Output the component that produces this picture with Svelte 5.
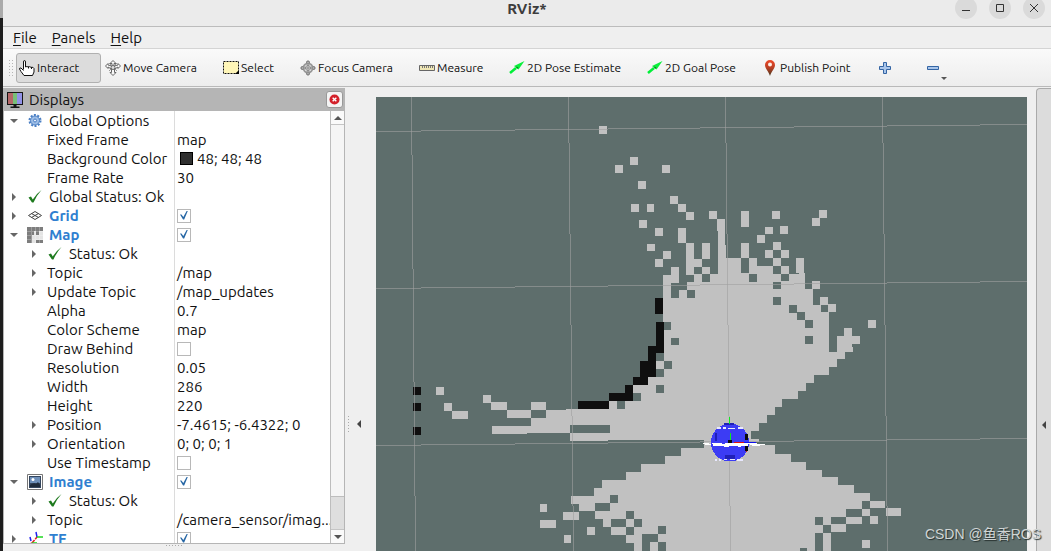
<script>
  let rows = $state([
    { depth: 0, arrow: 'open', icon: 'gear', name: 'Global Options' },
    { depth: 1, name: 'Fixed Frame', value: 'map' },
    { depth: 1, name: 'Background Color', value: '48; 48; 48', swatch: true },
    { depth: 1, name: 'Frame Rate', value: '30' },
    { depth: 0, arrow: 'closed', icon: 'ok', name: 'Global Status: Ok' },
    { depth: 0, arrow: 'closed', icon: 'grid', name: 'Grid', display: true, checked: true },
    { depth: 0, arrow: 'open', icon: 'map', name: 'Map', display: true, checked: true },
    { depth: 1, arrow: 'closed', icon: 'ok', name: 'Status: Ok' },
    { depth: 1, arrow: 'closed', name: 'Topic', value: '/map' },
    { depth: 1, arrow: 'closed', name: 'Update Topic', value: '/map_updates' },
    { depth: 1, name: 'Alpha', value: '0.7' },
    { depth: 1, name: 'Color Scheme', value: 'map' },
    { depth: 1, name: 'Draw Behind', checked: false },
    { depth: 1, name: 'Resolution', value: '0.05' },
    { depth: 1, name: 'Width', value: '286' },
    { depth: 1, name: 'Height', value: '220' },
    { depth: 1, arrow: 'closed', name: 'Position', value: '-7.4615; -6.4322; 0' },
    { depth: 1, arrow: 'closed', name: 'Orientation', value: '0; 0; 0; 1' },
    { depth: 1, name: 'Use Timestamp', checked: false },
    { depth: 0, arrow: 'open', icon: 'image', name: 'Image', display: true, checked: true },
    { depth: 1, arrow: 'closed', icon: 'ok', name: 'Status: Ok' },
    { depth: 1, arrow: 'closed', name: 'Topic', value: '/camera_sensor/imag...' },
    { depth: 0, arrow: 'closed', icon: 'tf', name: 'TF', display: true, checked: true }
  ]);

  const menus = ['File', 'Panels', 'Help'];

  const tools = [
    { icon: 'hand', name: 'Interact', active: true, cls: 'interact' },
    { icon: 'move', name: 'Move Camera', cls: 'move' },
    { icon: 'select', name: 'Select', cls: 'select' },
    { icon: 'focus', name: 'Focus Camera', cls: 'focus' },
    { icon: 'ruler', name: 'Measure', cls: 'measure' },
    { icon: 'arrow', name: '2D Pose Estimate', cls: 'pose' },
    { icon: 'arrow', name: '2D Goal Pose', cls: 'goal' },
    { icon: 'pin', name: 'Publish Point', cls: 'publish' }
  ];

  // Map cells as [x, y, width = 8, height = 8]
  const freeCells = [
    [599,126],[630,157],[615,165],[662,165],[638,181],[670,196],[678,204],[686,212],[709,211],
    [631,204],[647,204,7],[639,220],[655,228],[647,244,8,7],[663,251],[655,259],[678,228,8,15],
    [686,243,8,32],[694,259],[702,243,8,16],[702,267,8,7],
    [741,211,8,16],[772,211],[819,210],[812,218],[765,227,8,7],[780,226],[757,235],[741,243,8,15],
    [773,242],[765,250],[781,250],[773,258],[796,258,8,15],[812,281],[805,289],[820,297],[828,304],
    [844,328],[852,336],[868,320],
    [436,387],[444,403],[452,411,16],[483,395],[491,402,16],[507,410,24],[531,402,15],
    [540,504,7],[540,520,16],[587,527],[564,535,7],
    [870,501,15,7],[886,508,15],[862,509,8,7],[870,516],[846,517,16,7],[831,524,15],[862,540],
    [751,439,8,3]
  ];
  const unknownCells = [
    [687,290],[741,258,8,15],[749,274],[781,274,8,7],[773,282,8,7],[773,297],[789,305],[797,312],
    [805,320],[805,336],[829,344],[663,322],[671,338,8,7],[664,361],[656,385],[633,393],[617,401],
    [570,425,40],[642,534,16],[642,542,8,9],[658,542,8,9],[658,526],[610,495],[595,503,15],[626,511],
    [634,519],[611,519,15],[626,527],[815,517],[823,525],[815,533,8,18],[800,548,7,3]
  ];
  const wallCells = [
    [655,298,8,16],[656,322,8,31],[648,346,8,16],[640,361,16,16],[633,377,15],[625,385,8,16],
    [609,393,24],[578,401,31],[413,387],[413,403],[413,427]
  ];
</script>

{#snippet icon(kind)}
  {#if kind === 'hand'}
    <svg class="ico" viewBox="0 0 16 16"><path d="M4.500 9.500V2q0-1.500 1-1.500t1 1.500v5q1.500-1 2.700 0 1.500-.8 2.800.3 2.500-.5 3 1.200V12l-1.500 3.500h-8.500L2 11.500.5 9q0-1.500 1.500-1l2.500 2.500" fill="#fff" stroke="#111" /><path d="M9.500 6.500v2M12.500 7v2" stroke="#111" /></svg>
  {:else if kind === 'move'}
    <svg class="ico" viewBox="0 0 16 16"><path d="M8 .5 11 3.500H9V6l4-1V3.500L15.500 6 13 8.500V7L9.500 9v3.500H11L8 15.500l-3-3h1.500V9L3 7v1.500L.5 6 3 3.500V5l4 1V3.500H5z" fill="#f8f8f8" stroke="#666" /><path d="m4 11 8-8M4 3l8 8" stroke="#999" /><circle cx="8" cy="7.500" r="2" fill="#ddd" stroke="#666" /></svg>
  {:else if kind === 'select'}
    <svg class="ico" viewBox="0 0 16 16"><path d="M.5 1.500h15v12H.5z" fill="#fff6b8" stroke="#111" stroke-dasharray="2 1" /><path d="M16 10v4h-4z" fill="#000" /></svg>
  {:else if kind === 'focus'}
    <svg class="ico" viewBox="0 0 16 16" fill="none" stroke="#888"><circle cx="8" cy="8" r="4.500" stroke="#999" stroke-width="2" /><path d="M8 0v16M0 8h16M6.500 3.500v-2h3v2M6.500 12.500v2h3v-2M3.500 6.500h-2v3h2M12.500 6.500h2v3h-2" /><circle cx="8" cy="8" r="2.500" fill="#eee" /><path d="M8 5v6M5 8h6" /></svg>
  {:else if kind === 'ruler'}
    <svg class="ico" viewBox="0 0 16 16"><path d="M.5 5.500h15v5H.5z" fill="#efe6b4" stroke="#666" /><path d="M3.500 6v2M5.500 6v2M7.500 6v2M9.500 6v2M11.500 6v2M13.500 6v2" stroke="#777" /></svg>
  {:else if kind === 'arrow'}
    <svg class="ico" viewBox="0 0 16 16"><path d="m1 13 6-5" stroke="#00f038" stroke-width="2.500" /><path d="M15.500 1 5 6l4.500 3.500z" fill="#0bef3b" /><path d="M7 6.500 9.500 7.500 8 9z" fill="#087c20" /></svg>
  {:else if kind === 'pin'}
    <svg class="ico" viewBox="0 0 16 16"><defs><linearGradient id="pin" x2="0" y2="1"><stop stop-color="#ef4929" /><stop offset=".5" stop-color="#b83f24" /><stop offset="1" stop-color="#46391f" /></linearGradient></defs><path d="M8 0a5 5 0 0 1 5 5c0 3.500-3.500 6-5 11-1.500-5-5-7.500-5-11a5 5 0 0 1 5-5z" fill="url(#pin)" /><circle cx="8" cy="4.500" r="2" fill="#fff0e8" /></svg>
  {:else if kind === 'plus'}
    <svg class="ico small" viewBox="0 0 12 12"><path d="M4.500.5h3v4h4v3h-4v4h-3v-4h-4v-3h4z" fill="#a9c5ea" stroke="#3465a4" /></svg>
  {:else if kind === 'minus'}
    <svg class="ico small" viewBox="0 0 12 12"><path d="M.5 4.500h11v3H.5z" fill="#a9c5ea" stroke="#3465a4" /></svg>
  {:else if kind === 'monitor'}
    <svg class="ico" viewBox="0 0 16 16"><path d="M0 0h16v13H0z" fill="#151515" /><path d="M1 1h5v11H1z" fill="#b56868" /><path d="M6 1h4v11H6z" fill="#78c078" /><path d="M10 1h5v11h-5z" fill="#9292e8" /><path d="M6.500 13h3v1.500h3V16h-9v-1.500h3z" fill="#151515" /></svg>
  {:else if kind === 'gear'}
    <svg class="ico" viewBox="0 0 16 16"><circle cx="8" cy="7.500" r="5.500" fill="none" stroke="#4a7fc4" stroke-width="2" stroke-dasharray="2 1.450" /><circle cx="8" cy="7.500" r="4.500" fill="#9dbde6" stroke="#4a7fc4" /><circle cx="8" cy="7.500" r="1.500" fill="#e8f0fb" stroke="#4a7fc4" /></svg>
  {:else if kind === 'ok'}
    <svg class="ico" viewBox="0 0 16 16"><path d="M1.500 8.500 4 7.500l1.800 3Q9 5 14.500 1 9.500 6.500 6.500 13.500H5z" fill="#1e7a1e" /></svg>
  {:else if kind === 'grid'}
    <svg class="ico" viewBox="0 0 16 16" fill="none" stroke="#444"><path d="M1.500 7.500 8 3.500l6.500 4L8 11.500zM4.500 5.500l7 4M11.500 5.500l-7 4" /></svg>
  {:else if kind === 'map'}
    <svg class="ico" viewBox="0 0 16 16" shape-rendering="crispEdges"><path d="M0 0h16v16H0z" fill="#e4e4e4" /><path d="M0 0h16v4h-4v4H9V4H7v4H5v8H0z" fill="#7d7d7d" /><path d="M9 13h7v3H9z" fill="#7d7d7d" /><path d="M4.500 0v16M8.500 0v16M12.500 0v16M0 4.500h16M0 8.500h16M0 12.500h16" stroke="#fff" stroke-opacity=".25" /></svg>
  {:else if kind === 'image'}
    <svg class="ico" viewBox="0 0 16 16"><path d="M.5.5h15v15H.5z" fill="#fff" stroke="#777" /><path d="M2 2h12v12H2z" fill="#35475f" /><path d="M3 3h10v6H3z" fill="#6d8fb9" /><path d="M3 11q4-3 6-1l2-2 2 3v2H3z" fill="#1e2b3b" /><circle cx="6" cy="5.500" r="1.500" fill="#fff" /></svg>
  {:else if kind === 'tf'}
    <svg class="ico" viewBox="0 0 16 16" fill="none" stroke-width="1.500"><path d="m5 12 5-6" stroke="#e02020" stroke-dasharray="4 1" /><path d="M10 6 9 1M4 10 3 6" stroke="#2020f0" /><path d="M10 6h6M5 12h5" stroke="#20d820" /><path d="m1 14 4-2" stroke="#e02020" /></svg>
  {/if}
{/snippet}

<div class="screen">
  <div class="backdrop"></div>
  <main class="window">
    <header class="titlebar">
      <span></span>
      <h1>RViz*</h1>
      <div class="controls">
        <button aria-label="Minimize"><svg viewBox="0 0 22 22"><path d="M7 13.500h8" /></svg></button>
        <button aria-label="Maximize"><svg viewBox="0 0 22 22"><path d="M7.500 7.500h7v7h-7z" /></svg></button>
        <button aria-label="Close"><svg viewBox="0 0 22 22"><path d="m7 7 8 8M15 7l-8 8" /></svg></button>
      </div>
    </header>

    <nav class="menubar">
      {#each menus as menu}
        <button><u>{menu[0]}</u>{menu.slice(1)}</button>
      {/each}
    </nav>

    <div class="toolbar">
      <span class="grip"></span>
      {#each tools as tool}
        <button class="tool {tool.cls}" class:active={tool.active}>{@render icon(tool.icon)}<span>{tool.name}</span></button>
      {/each}
      <button class="tool add" aria-label="Add tool">{@render icon('plus')}</button>
      <button class="tool remove" aria-label="Remove tool">{@render icon('minus')}<i class="drop"></i></button>
    </div>

    <div class="workspace">
      <section class="dock">
        <div class="dock-title">
          {@render icon('monitor')}
          <h2>Displays</h2>
          <button aria-label="Close panel"><svg viewBox="0 0 12 12"><circle cx="6" cy="6" r="5.500" fill="#d3202a" /><path d="m4 4 4 4M8 4 4 8" stroke="#fff" stroke-width="1.500" /></svg></button>
        </div>
        <div class="tree">
          <div class="tree-view">
            <table>
              <tbody>
                {#each rows as row, i}
                  <tr>
                    <th scope="row">
                      <div class="cell" class:child={row.depth === 1}>
                        <span class="expander {row.arrow ?? ''}"></span>
                        {#if row.icon}{@render icon(row.icon)}{/if}
                        {#if row.checked !== undefined}
                          <label for="row-{i}" class:display={row.display}>{row.name}</label>
                        {:else}
                          <span class="name">{row.name}</span>
                        {/if}
                      </div>
                    </th>
                    <td>
                      <div class="value">
                        {#if row.swatch}<span class="swatch"></span>{/if}
                        {#if row.checked !== undefined}
                          <input id="row-{i}" type="checkbox" bind:checked={row.checked} />
                        {:else if row.value}
                          <span class="text">{row.value}</span>
                        {/if}
                      </div>
                    </td>
                  </tr>
                {/each}
              </tbody>
            </table>
          </div>
          <div class="scrollbar">
            <button aria-label="Scroll up"><i class="up"></i></button>
            <div class="track"><div class="thumb"></div></div>
            <button aria-label="Scroll down"><i class="down"></i></button>
          </div>
        </div>
        <div class="split"><span></span></div>
      </section>

      <div class="collapse"><span class="dots"></span><button aria-label="Hide left dock"><i class="left"></i></button></div>

      <div class="view">
        <svg class="scene" viewBox="376 97 651 454" preserveAspectRatio="xMidYMin slice" shape-rendering="crispEdges" role="img" aria-label="Occupancy map">
          <path fill="#5e6e6c" d="M0 0h1600v1200H0z" />
          <g fill="#c1c1c1">
            <path d="M663 275h8v-8h8v16h-8v15h8v-8h8v-8h7v-8h8v8h8v-8h8v-43h-1v-12h8v26h1v13h31v8h16v8h26v-1h6v24h8v8h8v7h8v32h8v-8h15v11h1v5h-8v7h-8v8h-8v8h-15v8h-8v8h-8v8h-16v8h-7v8h-8v8h-8v8h-8v16h-39v-7H608v1h-38v-8h-43v1h-35v-8h39v-8h15v-8h20v-1h43v-8h24v-16h15v-8h8v-8h8z" />
            <path d="M781 266h8v8h-8zM805 305h8v8h-8z" />
            <path d="M704 431h47v9h5v5h19v9h16v8h15v8h16v7h16v8h16v8h16v8h-8v8h-16v8h-15v34H634v-8h-8v-8h-15v-8h-8v-8h-8v-8h-16v9h-16v-8h16v-8h-8v-8h23v-8h8v-8h24v-8h15v-8h24v-8h16v-8h23z" />
            {#each freeCells as [x, y, w = 8, h = 8]}<rect {x} {y} width={w} height={h} />{/each}
          </g>
          <g fill="#5e6e6c">
            {#each unknownCells as [x, y, w = 8, h = 8]}<rect {x} {y} width={w} height={h} />{/each}
            <path d="M656 353h8v8h-8zM656 369h8v8h-8z" />
          </g>
          <path d="M656 361h8v8h-8z" fill="#c1c1c1" />
          <g fill="#0f0f0f">
            {#each wallCells as [x, y, w = 8, h = 8]}<rect {x} {y} width={w} height={h} />{/each}
          </g>
          <g stroke="#a0a0a0" stroke-opacity=".6" fill="none">
            <path d="M411.500 97 415.500 551M568.500 97l5 454M725.500 97l5 454M882.500 97l5 454" />
            <path d="M376 131.500 1027 124.500M376 288.500 1027 281.500M376 445.500 1027 438.500" />
          </g>
          <circle cx="730" cy="442.500" r="19" fill="#3c3cf4" />
          <path d="M724 423h10v2h-10zM725 455h10v4h-10zM715 433h2v8h-2z" fill="#2020b8" />
          <path d="M717 427h4v2h-4zM723 427h3v2h-3zM728 428h7v1h-7zM738 427h5v2h-5zM715 459h2v2h-2zM719 459h2v2h-2zM724 459h3v1h-3zM730 459h5v1h-5zM737 459h6v2h-6z" fill="#e8e8ff" />
          <path d="M729.500 417v7M730.500 433v9" stroke="#10e820" />
          <path d="M734 442.500h10M746.500 449v3" stroke="#e01010" />
          <path d="M744 442.500h12" stroke="#1010f0" />
          <path d="M728 440h4v4h-4zM745 434h3v6h-3zM745 445h3v6h-3z" fill="#0a0a0a" />
          <path d="M703 443h6v1h-6zM705 444h6v1h-6zM712 443h10v1h-10zM713 444h35v2h-35zM725 443h18v1h-18zM724 446h5v1h-5zM738 446h3v1h-3zM743 443h14v1h-14zM750 444h15v1h-15zM752 445h8v1h-8z" fill="#fff" />
        </svg>
        <span class="watermark">CSDN @鱼香ROS</span>
      </div>

      <button class="side" aria-label="Hide right dock"><i class="left"></i></button>
    </div>
  </main>
</div>

<style>
  :global(body) { margin: 0; background: #fff; }
  .screen {
    display: flex;
    height: 100vh;
    padding-right: 5px;
    overflow: hidden;
    box-sizing: border-box;
    color: #111;
    font: 15px/19px Ubuntu, "Noto Sans", "Noto Sans CJK SC", sans-serif;
  }
  .backdrop { flex: 0 0 3px; background: linear-gradient(#aaa 18px, #1d1d1d 18px); }
  .window { flex: 1; min-width: 0; display: flex; flex-direction: column; background: #efefef; }
  button { padding: 0; border: 0; background: none; color: inherit; font: inherit; }
  h1, h2 { margin: 0; }
  svg { display: block; }

  .titlebar {
    display: grid;
    grid-template-columns: 1fr auto 1fr;
    height: 26px;
    background: #ebebeb;
    border-bottom: 1px solid #bcbcbc;
  }
  .titlebar h1 { font-size: 15px; line-height: 18px; font-weight: 700; color: #3d3d3d; }
  .controls { display: flex; justify-content: flex-end; gap: 12px; padding-right: 6px; }
  .controls button { width: 22px; height: 22px; margin-top: -3px; border-radius: 50%; background: #dadada; }
  .controls path { fill: none; stroke: #333; }

  .menubar { display: flex; gap: 15px; height: 21px; padding-left: 10px; border-bottom: 1px solid #d4d4d4; }
  .menubar button { line-height: 22px; }
  .menubar u { text-underline-offset: 2px; }

  .toolbar {
    display: flex;
    align-items: center;
    height: 37px;
    background: linear-gradient(#fafafa, #ededed);
    border-bottom: 1px solid #b9b9b9;
    font-size: 12px;
  }
  .grip { width: 5px; height: 18px; margin: 0 3px 0 5px; background: radial-gradient(circle, #b5b5b5 1px, transparent 1px) 0 0 / 3px 3px; }
  .tool { display: flex; align-items: center; gap: 2px; height: 30px; box-sizing: border-box; white-space: nowrap; position: relative; }
  .tool.active { padding-left: 2px; background: #dcdcdc; border: 1px solid #b0b0b0; border-radius: 3px; }
  .interact { width: 85px; }
  .move { width: 113px; padding-left: 4px; }
  .select { width: 78px; padding-left: 9px; }
  .focus { width: 119px; padding-left: 8px; }
  .measure { width: 90px; padding-left: 8px; }
  .pose { width: 138px; padding-left: 8px; }
  .goal { width: 114px; padding-left: 8px; }
  .publish { width: 126px; padding-left: 9px; }
  .add { width: 48px; }
  .drop { position: absolute; right: -8px; bottom: 3px; border: 3px solid transparent; border-top-color: #555; border-bottom: 0; }
  .ico { flex: none; width: 16px; height: 16px; }
  .ico.small { width: 12px; height: 12px; }

  .workspace { flex: 1; min-height: 0; display: flex; padding-top: 1px; }
  .dock { flex: 0 0 342px; display: flex; flex-direction: column; min-height: 0; }
  .dock-title { display: flex; align-items: center; flex: 0 0 23px; padding: 0 2px 0 4px; background: #b5b5b5; }
  .dock-title h2 { flex: 1; margin-left: 6px; font-size: 15px; font-weight: 400; }
  .dock-title button { display: grid; place-items: center; width: 17px; height: 17px; background: #f4f4f4; border: 1px solid #999; border-radius: 3px; box-sizing: border-box; }
  .dock-title button svg { width: 11px; height: 11px; }
  .tree { flex: 1; min-height: 0; display: flex; background: #fff; border: 1px solid #b5b5b5; border-top: 0; }
  .tree-view { flex: 1; min-width: 0; overflow: hidden; }
  table { width: 100%; table-layout: fixed; border-collapse: collapse; }
  th, td { height: 19px; padding: 0; text-align: left; font-weight: 400; }
  th { width: 170px; border-right: 1px solid #dcdcdc; }
  .cell, .value { display: flex; align-items: center; height: 19px; white-space: nowrap; }
  .cell { padding-left: 6px; }
  .cell.child { padding-left: 26px; }
  .cell .ico { margin: 0 6px 0 9px; }
  .expander { flex: none; width: 8px; height: 8px; }
  .cell.child > .expander + .name, .cell.child > .expander + label { margin-left: 9px; }
  .expander.open::before, .expander.closed::before { content: ""; display: block; border: 4px solid transparent; }
  .expander.open::before { margin-top: 2px; border-top-color: #666; border-bottom: 0; }
  .expander.closed::before { margin-left: 2px; border-left-color: #666; border-right: 0; }
  .display { color: #2f7fd0; font-weight: 700; }
  .value { padding-left: 2px; }
  .swatch { width: 11px; height: 11px; margin: 0 4px 0 3px; border: 1px solid #000; background: #303030; }
  input { appearance: none; box-sizing: border-box; width: 14px; height: 14px; margin: 0; border: 1px solid #b8b8b8; background: #fff; }
  input:checked::before { content: ""; display: block; width: 8px; height: 9px; margin: 1px 2px; background: #2767a5; clip-path: polygon(0 45%, 18% 45%, 42% 72%, 86% 0, 100% 0, 52% 100%, 38% 100%); }

  .scrollbar { flex: 0 0 13px; display: flex; flex-direction: column; border-left: 1px solid #bdbdbd; background: #f5f5f5; }
  .scrollbar button { display: grid; place-items: center; height: 13px; background: #fafafa; }
  .track { flex: 1; display: flex; flex-direction: column; justify-content: flex-end; border: solid #c5c5c5; border-width: 1px 0; }
  .thumb { height: 8%; background: #dedede; border-top: 1px solid #bdbdbd; }
  .up { border: 4px solid transparent; border-bottom-color: #555; border-top: 0; }
  .down { border: 4px solid transparent; border-top-color: #555; border-bottom: 0; }
  .left { border: 4px solid transparent; border-right-color: #444; border-left: 0; }
  .split { flex: 0 0 7px; display: flex; justify-content: center; }
  .split span { width: 18px; height: 3px; background: radial-gradient(circle, #aaa 1px, transparent 1px) 0 0 / 3px 3px; }

  .collapse { flex: 0 0 31px; display: flex; align-items: center; padding-top: 209px; box-sizing: border-box; }
  .collapse .dots { width: 3px; height: 18px; margin-left: 2px; background: radial-gradient(circle, #aaa 1px, transparent 1px) 0 0 / 3px 3px; }
  .collapse button { display: grid; margin-left: 7px; }
  .view { flex: 1; min-width: 0; position: relative; margin-top: 9px; }
  .scene { width: 100%; height: 100%; }
  .watermark { position: absolute; right: -14px; bottom: 6px; color: #d0d5d5; text-shadow: 1px 1px 1px #26302f; font: 14px/22px "Liberation Sans", "Noto Sans CJK SC", sans-serif; white-space: nowrap; z-index: 1; }
  .side { flex: 0 0 15px; display: grid; place-items: center; margin-left: 9px; padding-top: 209px; background: #dcdcdc; border: 1px solid #aaa; border-width: 1px 0 0 1px; border-radius: 4px 0 0 0; box-sizing: border-box; }
</style>
